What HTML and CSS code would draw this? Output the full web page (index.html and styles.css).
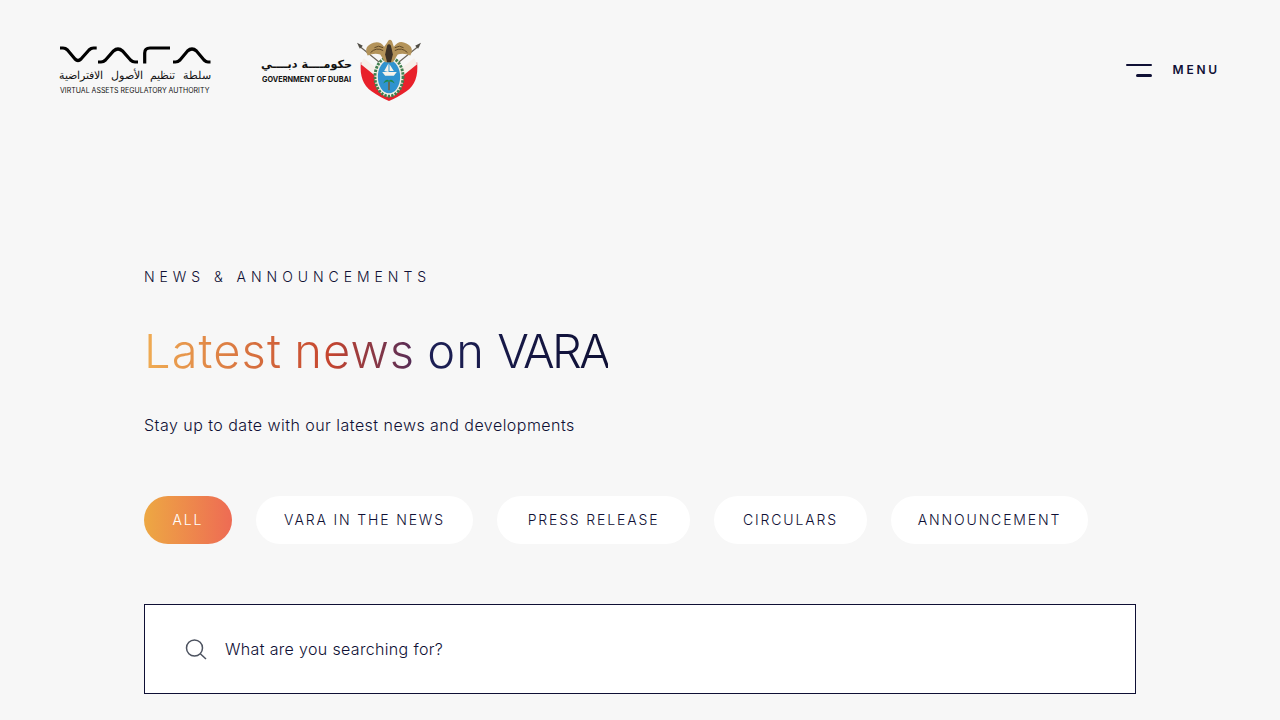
FILE: index.html
```html
<!DOCTYPE html>
<html lang="en">
<head>
    <meta charset="UTF-8">
    <meta name="viewport" content="width=device-width, initial-scale=1.0">
    <title>News &amp; Announcements - VARA</title>
    <link rel="stylesheet" href="styles.css">
</head>
<body>

    <header class="site-header">
        <div class="logos">
            <a class="logo-vara" href="#">
                <svg class="vara-mark" width="151" height="18" viewBox="0 0 151 18" fill="none" stroke="#000" stroke-width="3.2">
                    <path d="M0 2H3Q5.500 2 7.500 4L15 13Q18 16 21 13L29 4Q31 2 33.500 2H36.700"/>
                    <path d="M38 16H41Q43.500 16 45.500 14L53.500 5Q58 1 62.500 5L70.500 14Q72.500 16 75 16H78"/>
                    <path d="M84.700 17.500V7Q84.700 2 90 2H110"/>
                    <path d="M113 16H115.500Q118 16 120 14L127.500 5Q132 1 136.500 5L144 14Q146 16 148 16H150.500"/>
                </svg>
                <span class="vara-ar" lang="ar" dir="rtl">سلطة تنظيم الأصول الافتراضية</span>
                <span class="vara-en">VIRTUAL ASSETS REGULATORY AUTHORITY</span>
            </a>
            <a class="logo-dubai" href="#">
                <span class="dubai-text">
                    <span class="dubai-ar" lang="ar" dir="rtl">حكومــــة دبــــي</span>
                    <span class="dubai-en">GOVERNMENT OF DUBAI</span>
                </span>
                <svg class="crest" width="64" height="64" viewBox="0 0 66 66">
                    <path d="M2 8L23 25M64 8L43 25" stroke="#6b6459" stroke-width="1.200"/>
                    <path d="M0 5L6 8 3 11ZM66 5L60 8 63 11Z" fill="#4f4c44"/>
                    <path d="M4 25Q2 46 15 55 25 62 33 65 41 62 51 55 64 46 62 25L45 38H21Z" fill="#e8212b"/>
                    <path d="M7 21L24 34H42L59 21 62 27 46 40H20L4 27Z" fill="#f6efe9"/>
                    <ellipse cx="33" cy="40" rx="15" ry="20.500" fill="#f2efe4"/>
                    <ellipse cx="33" cy="40" rx="14.500" ry="20" fill="none" stroke="#3f7f4f" stroke-width="3" stroke-dasharray="2.500 1.200"/>
                    <ellipse cx="33" cy="40" rx="11.500" ry="17" fill="#2f93cf"/>
                    <path d="M26 35H41L38 39H29Z" fill="#f6f3ea"/>
                    <path d="M32.500 26V35L28 34ZM33.500 27L38 34H33.500Z" fill="#f6f3ea"/>
                    <path d="M33 45V54" stroke="#7a5a2c" stroke-width="1.500"/>
                    <path d="M27 47Q30 41 33 44 36 41 39 47 35 44 33 45 31 44 27 47Z" fill="#1f8a4a"/>
                    <path d="M11 18Q6 9 17 5 24 3 28 9L31 5Q33 0 36 3L38 9Q43 2 49 5 60 9 55 18 48 15 42 17L37 25H29L24 17Q18 15 11 18Z" fill="#b3935a"/>
                    <path d="M31 8Q33 5 35 8L37 17 35 25H31L29 17Z" fill="#3a3026"/>
                    <path d="M14 15Q20 9 27 13M52 15Q46 9 39 13M18 10Q22 7 27 10M48 10Q44 7 39 10" stroke="#5c4526" stroke-width="1" fill="none"/>
                </svg>
            </a>
        </div>
        <button class="menu-btn" type="button">
            <span class="menu-icon"><i></i><i></i></span>
            <span class="menu-label">MENU</span>
        </button>
    </header>

    <main class="news">
        <p class="eyebrow">NEWS &amp; ANNOUNCEMENTS</p>
        <h1 class="title">Latest news on <span class="title-end">VARA</span></h1>
        <p class="intro">Stay up to date with our latest news and developments</p>

        <div class="filters">
            <a class="pill active" href="#">ALL</a>
            <a class="pill" href="#">VARA IN THE NEWS</a>
            <a class="pill" href="#">PRESS RELEASE</a>
            <a class="pill" href="#">CIRCULARS</a>
            <a class="pill" href="#">ANNOUNCEMENT</a>
        </div>

        <form class="search">
            <svg class="search-icon" width="22" height="22" viewBox="0 0 22 22" fill="none" stroke="#4d5360" stroke-width="1.500">
                <circle cx="9.500" cy="10" r="8"/>
                <path d="M15.300 15.800L21 21"/>
            </svg>
            <span class="search-text">What are you searching for?</span>
        </form>
    </main>

</body>
</html>
```

FILE: styles.css
```css
body {
    margin: 0;
    height: 720px;
    overflow: hidden;
    background-color: #f7f7f7;
    color: #0f1035;
    font-family: Inter, "Liberation Sans", sans-serif;
    font-weight: 300;
}

a {
    color: inherit;
    text-decoration: none;
}

.site-header {
    display: flex;
    justify-content: space-between;
    align-items: center;
    height: 140px;
    padding: 0 60px;
}

.logos {
    display: flex;
    align-items: center;
    gap: 50px;
}

.logo-vara {
    display: flex;
    flex-direction: column;
    width: 151px;
    color: #111;
}

.vara-mark {
    display: block;
}

.vara-ar {
    margin-top: 4px;
    font-family: "DejaVu Sans", sans-serif;
    font-size: 11.100px;
    line-height: 16px;
    word-spacing: 4px;
    white-space: nowrap;
    text-align: center;
}

.vara-en {
    margin-top: 2px;
    font-size: 7px;
    font-weight: 400;
    line-height: 9px;
    white-space: nowrap;
}

.logo-dubai {
    display: flex;
    align-items: center;
    gap: 5px;
    color: #111;
}

.dubai-text {
    display: flex;
    flex-direction: column;
    align-items: center;
    width: 91px;
}

.dubai-ar {
    font-family: "DejaVu Sans", sans-serif;
    font-size: 11.200px;
    font-weight: 700;
    line-height: 18px;
    white-space: nowrap;
}

.dubai-en {
    margin-top: 1px;
    font-size: 7.300px;
    font-weight: 700;
    line-height: 9px;
    white-space: nowrap;
}

.menu-btn {
    display: flex;
    align-items: center;
    gap: 21px;
    padding: 0;
    border: none;
    background: none;
    color: #0f1035;
    font-family: inherit;
}

.menu-icon {
    display: flex;
    flex-direction: column;
    align-items: flex-end;
    gap: 8px;
    width: 26px;
}

.menu-icon i {
    display: block;
    width: 100%;
    height: 2.500px;
    border-radius: 2px;
    background-color: #0f1035;
}

.menu-icon i + i {
    width: 16px;
}

.menu-label {
    margin-bottom: 2px;
    font-size: 12px;
    font-weight: 600;
    letter-spacing: 2.800px;
}

.news {
    width: 992px;
    margin: 0 auto;
}

.eyebrow {
    margin: 128px 0 0;
    font-size: 14px;
    line-height: 18px;
    letter-spacing: 4.950px;
    white-space: nowrap;
}

.title {
    display: inline-block;
    margin: 35px 0 0;
    font-size: 47px;
    font-weight: 300;
    line-height: 60px;
    letter-spacing: 1.100px;
    word-spacing: -2.200px;
    white-space: nowrap;
    background-image: linear-gradient(90deg, #f0ad54 0%, #c5452f 40%, #5c2e55 57%, #1c1f55 62%, #0f1035 100%);
    -webkit-background-clip: text;
    background-clip: text;
    color: transparent;
}

.title-end {
    letter-spacing: -2.600px;
}

.intro {
    margin: 32px 0 0;
    font-size: 16px;
    line-height: 24px;
    letter-spacing: 0.470px;
}

.filters {
    display: grid;
    grid-template-columns: 88px 217px 193px 153px 197px;
    gap: 24px;
    margin-top: 59px;
}

.pill {
    height: 48px;
    border-radius: 24px;
    background-color: #fff;
    font-size: 14px;
    line-height: 48px;
    letter-spacing: 1.850px;
    text-align: center;
    white-space: nowrap;
}

.pill.active {
    background-image: linear-gradient(90deg, #eda843, #ee6b54);
    color: #fff;
}

.search {
    display: flex;
    align-items: center;
    gap: 18px;
    box-sizing: border-box;
    height: 90px;
    margin-top: 60px;
    padding: 0 40px;
    border: 1px solid #0f1035;
    background-color: #fff;
}

.search-icon {
    flex: none;
}

.search-text {
    font-size: 16px;
    letter-spacing: 0.340px;
}
```
